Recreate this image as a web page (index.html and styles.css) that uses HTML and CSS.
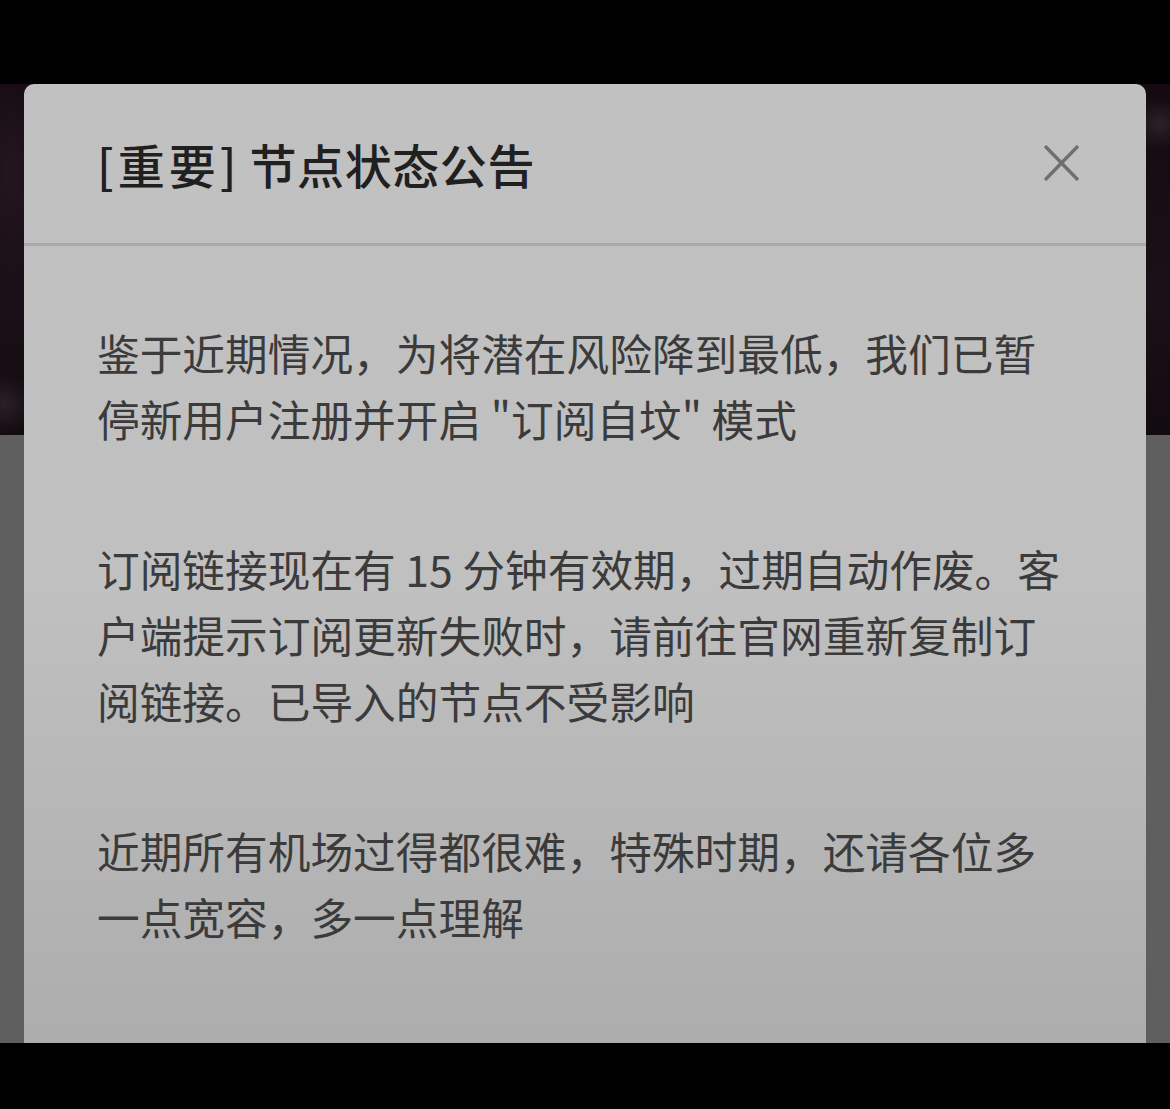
FILE: index.html
```html
<!DOCTYPE html>
<html lang="zh-CN">
<head>
  <meta charset="UTF-8" />
  <title>节点状态公告</title>
  <link rel="stylesheet" href="styles.css">
</head>
<body>

<div id="screen">
  <div class="banner"></div>
  <div class="page-bg"></div>

  <div class="dialog">
    <div class="dialog-header">
      <div class="dialog-title"><span class="tag">[重要]</span>节点状态公告</div>
      <svg class="close-btn" width="35" height="36" viewBox="0 0 35 36">
        <path d="M1 1 L34 35 M34 1 L1 35" stroke="#6f6f6f" stroke-width="3.4" fill="none" />
      </svg>
    </div>
    <div class="dialog-body">
      <p>鉴于近期情况，为将潜在风险降到最低，我们已暂停新用户注册并开启 "订阅自坟" 模式</p>
      <p>订阅链接现在有 15 分钟有效期，过期自动作废。客户端提示订阅更新失败时，请前往官网重新复制订阅链接。已导入的节点不受影响</p>
      <p>近期所有机场过得都很难，特殊时期，还请各位多一点宽容，多一点理解</p>
    </div>
  </div>
</div>

</body>
</html>
```

FILE: styles.css
```css
body {
  margin: 0;
  padding: 0;
  background: #000;
  font-family: "Noto Sans CJK SC", "Noto Sans", sans-serif;
}
#screen {
  position: relative;
  margin-top: 84px;
  height: 959px;
  overflow: hidden;
  background: #5f5f5f;
}
.banner {
  height: 351px;
  background:
    radial-gradient(ellipse 30px 26px at 1160px 40px, #2a2228, transparent),
    radial-gradient(ellipse 40px 120px at 10px 90px, #24161f, transparent),
    radial-gradient(ellipse 30px 30px at 4px 320px, #2a1f27, transparent),
    linear-gradient(to bottom, #140a10, #1b1017 60%, #120b10);
}
.page-bg {
  height: 608px;
  background: #5f5f5f;
}
.dialog {
  position: absolute;
  top: 0;
  left: 24px;
  width: 1122px;
  height: 1100px;
  border-radius: 10px 10px 0 0;
  background: linear-gradient(to bottom, #c1c1c1 0px, #c0c0c0 500px, #adadad 959px);
}
.dialog-header {
  height: 159px;
  display: flex;
  align-items: center;
  justify-content: space-between;
  padding: 0 67px 0 73px;
  border-bottom: 3px solid #a9a9a9;
}
.dialog-title {
  font-size: 47px;
  font-weight: 500;
  color: #202020;
  letter-spacing: 0.6px;
}
.dialog-title .tag {
  letter-spacing: 4px;
  margin-right: 9px;
}
.close-btn {
  display: block;
  margin-top: -2px;
}
.dialog-body {
  padding: 73px 73px 0 73px;
}
.dialog-body p {
  margin: 0 0 84px 0;
  font-size: 42.7px;
  line-height: 66px;
  color: #3b3b3b;
}
```
